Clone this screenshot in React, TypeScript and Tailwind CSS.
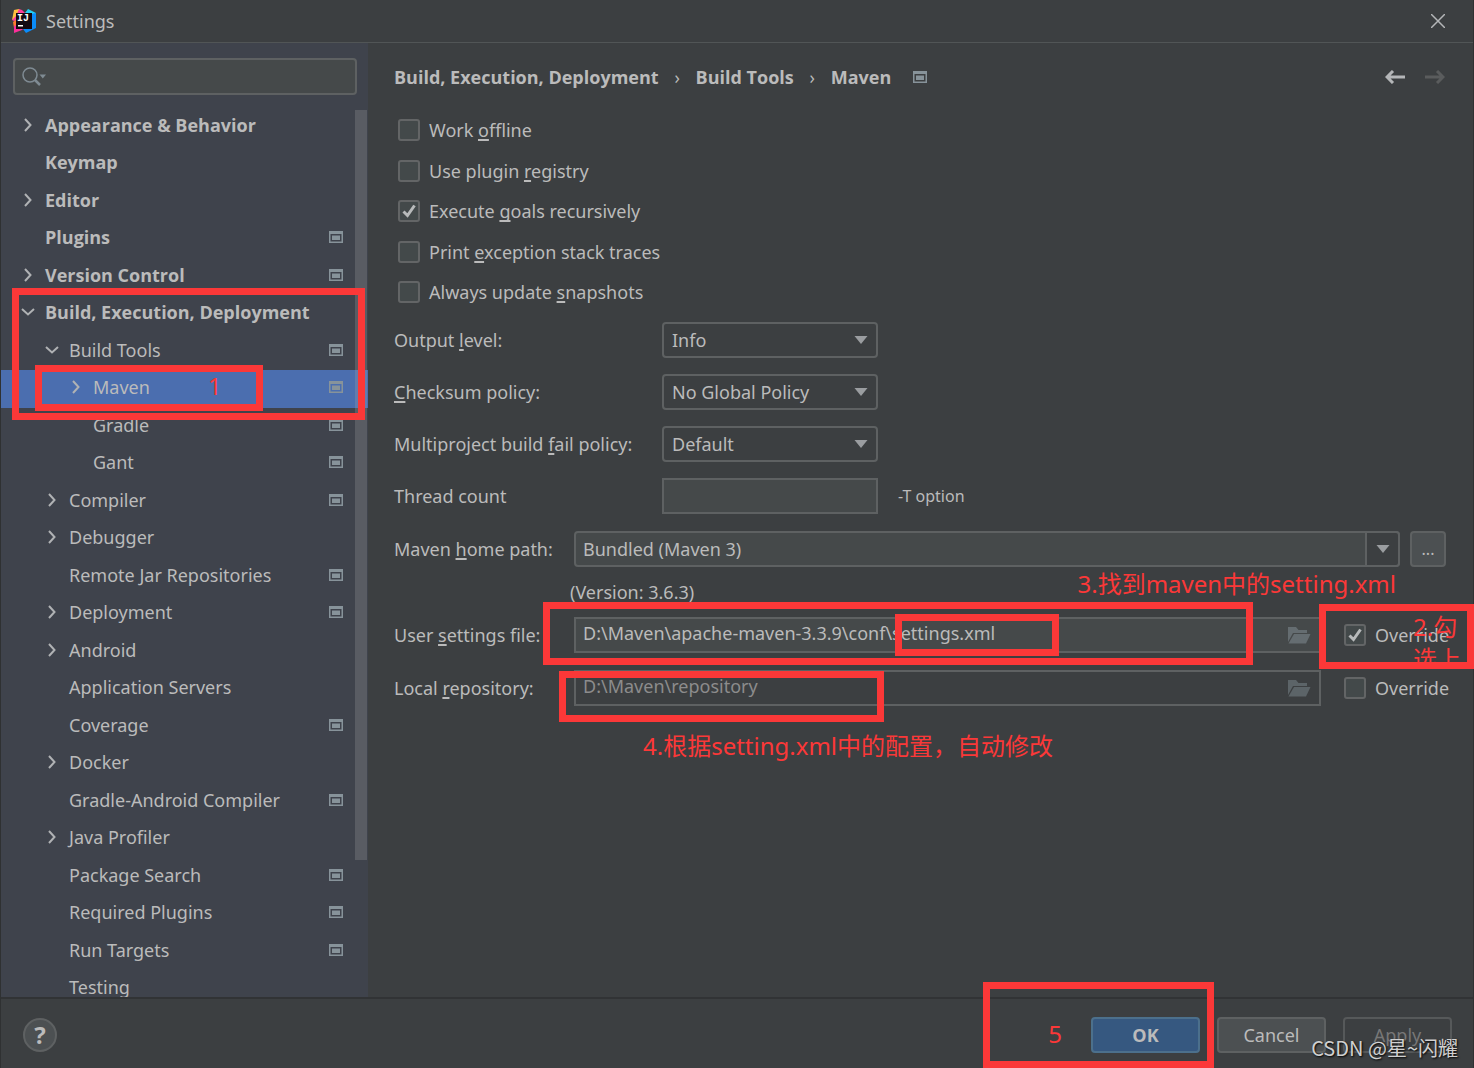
import React from "react";
import clsx from "clsx";

type TreeItem = {
  name: string;
  level: 0 | 1 | 2;
  arrow?: "right" | "down";
  project?: boolean;
  selected?: boolean;
};

const tree: TreeItem[] = [
  { name: "Appearance & Behavior", level: 0, arrow: "right" },
  { name: "Keymap", level: 0 },
  { name: "Editor", level: 0, arrow: "right" },
  { name: "Plugins", level: 0, project: true },
  { name: "Version Control", level: 0, arrow: "right", project: true },
  { name: "Build, Execution, Deployment", level: 0, arrow: "down" },
  { name: "Build Tools", level: 1, arrow: "down", project: true },
  { name: "Maven", level: 2, arrow: "right", project: true, selected: true },
  { name: "Gradle", level: 2, project: true },
  { name: "Gant", level: 2, project: true },
  { name: "Compiler", level: 1, arrow: "right", project: true },
  { name: "Debugger", level: 1, arrow: "right" },
  { name: "Remote Jar Repositories", level: 1, project: true },
  { name: "Deployment", level: 1, arrow: "right", project: true },
  { name: "Android", level: 1, arrow: "right" },
  { name: "Application Servers", level: 1 },
  { name: "Coverage", level: 1, project: true },
  { name: "Docker", level: 1, arrow: "right" },
  { name: "Gradle-Android Compiler", level: 1, project: true },
  { name: "Java Profiler", level: 1, arrow: "right" },
  { name: "Package Search", level: 1, project: true },
  { name: "Required Plugins", level: 1, project: true },
  { name: "Run Targets", level: 1, project: true },
  { name: "Testing", level: 1 },
];

const indent = ["pl-[19px]", "pl-[43px]", "pl-[67px]"];

// "Work &offline" -> the letter after & is the underlined mnemonic
function Mnemonic({ text }: { text: string }) {
  const at = text.indexOf("&");
  if (at < 0) return <span>{text}</span>;
  return (
    <span className="whitespace-nowrap">
      {text.slice(0, at)}
      <u className="underline decoration-2 underline-offset-2 [text-decoration-skip-ink:none]">
        {text[at + 1]}
      </u>
      {text.slice(at + 2)}
    </span>
  );
}

function ProjectIcon() {
  return (
    <svg width="14" height="12" viewBox="0 0 14 12" className="shrink-0">
      <path fill="#87939a" fillRule="evenodd" d="M0 0h14v12H0zM1.5 3v7.5h11V3z" />
      <path fill="#87939a" d="M3 4.5h8v4.5H3z" />
    </svg>
  );
}

function Chevron({ dir }: { dir: "right" | "down" }) {
  return (
    <svg width="16" height="16" viewBox="0 0 16 16" fill="none" stroke="#b0b2b4" strokeWidth="2">
      <path d={dir === "right" ? "M5 2l5.5 6L5 14" : "M2 5l6 5.5L14 5"} />
    </svg>
  );
}

function DownTriangle() {
  return (
    <svg width="14" height="8" viewBox="0 0 14 8" className="pointer-events-none">
      <path fill="#9a9da0" d="M0.5 0h13L7 8z" />
    </svg>
  );
}

function FolderIcon({ dim }: { dim?: boolean }) {
  return (
    <svg width="24" height="18" viewBox="0 0 24 18" fill={dim ? "#5c6468" : "#656d71"}>
      <path d="M1 16V1h8l2.500 3H20v3H6z" />
      <path d="M7 8h16.500L19 17.500H1.500z" />
    </svg>
  );
}

function Logo() {
  return (
    <svg width="24" height="24" viewBox="0 0 24 24">
      <path fill="#fdc13f" d="M2 1l5-1 3 4-5 5-5 2z" />
      <path fill="#fc3d9c" d="M7 0l3 1 4 4-8 6-4 1-2-1 4-4z" />
      <path fill="#fe7a2f" d="M1 13l4-3v8l-3 1z" />
      <path fill="#fb2f9a" d="M2 17l3-1 6 4-1 1-8 3z" />
      <path fill="#21d0f6" d="M13 4l3-4 4 2 4 2-1 6-4-5z" />
      <path fill="#0a8cfa" d="M19 5l5-1v15l-4 2-6 3-3-4 9-2z" />
      <path fill="#120a12" d="M4 4h16v16H4z" />
      <text x="5" y="12" fill="#fff" className="font-['Liberation_Mono'] text-[10px] font-bold">
        IJ
      </text>
      <path fill="#fff" d="M6 16h5v1.500H6z" />
    </svg>
  );
}

function Checkbox({ label, checked }: { label: string; checked?: boolean }) {
  return (
    <label className="flex items-center gap-[9px]">
      <span className="grid place-items-center">
        <input
          type="checkbox"
          defaultChecked={checked}
          className="peer col-start-1 row-start-1 size-[22px] appearance-none rounded-[3px] border-2 border-[#636566] bg-[#43494a]"
        />
        <svg
          width="14"
          height="14"
          viewBox="0 0 14 14"
          fill="none"
          stroke="#b8babb"
          strokeWidth="3"
          className="pointer-events-none invisible col-start-1 row-start-1 peer-checked:visible"
        >
          <path d="M1.500 7.500l4 4L12.500 1.500" />
        </svg>
      </span>
      <Mnemonic text={label} />
    </label>
  );
}

function SelectRow({ id, label, value }: { id: string; label: string; value: string }) {
  return (
    <div className="flex h-9 items-center">
      <label htmlFor={id} className="w-[268px] shrink-0">
        <Mnemonic text={label} />
      </label>
      <div className="grid h-9 w-[216px] items-center">
        <select
          id={id}
          className="col-start-1 row-start-1 h-9 appearance-none rounded border-2 border-[#5e6162] bg-[#3c3f41] pl-2"
        >
          <option>{value}</option>
        </select>
        <span className="pointer-events-none col-start-1 row-start-1 mr-2.5 justify-self-end">
          <DownTriangle />
        </span>
      </div>
    </div>
  );
}

type PathRowProps = { id: string; label: string; value: string; overridden?: boolean };

function PathRow({ id, label, value, overridden }: PathRowProps) {
  return (
    <div className="flex h-9 items-center">
      <label htmlFor={id} className="w-[180px] shrink-0">
        <Mnemonic text={label} />
      </label>
      <div
        className={clsx(
          "flex h-9 flex-1 items-center border-2 border-[#5e6162] pr-2",
          overridden ? "bg-[#45494a]" : "bg-[#3c3f41] text-[#8c8c8c]"
        )}
      >
        <input id={id} defaultValue={value} disabled={!overridden} className="h-full min-w-0 flex-1 pb-1 pl-[7px]" />
        <button type="button" aria-label="Browse">
          <FolderIcon dim={!overridden} />
        </button>
      </div>
      <div className="ml-[23px] w-[106px] shrink-0">
        <Checkbox label="Override" checked={overridden} />
      </div>
    </div>
  );
}

function Sidebar() {
  return (
    <aside className="relative flex w-[367px] shrink-0 flex-col overflow-hidden bg-[#3f434c]">
      <div className="mt-[15px] mr-[11px] ml-3 flex h-[37px] shrink-0 items-center rounded border-2 border-[#5e6162] bg-[#45494a] pl-[7px]">
        <svg width="26" height="20" viewBox="0 0 26 20" fill="none" stroke="#7f8b93">
          <circle cx="8" cy="8" r="7" strokeWidth="1.500" />
          <path d="M13 13l5 5" strokeWidth="2.500" />
          <path d="M17.500 7.500h6.500l-3.250 4z" fill="#7f8b93" stroke="none" />
        </svg>
        <input type="text" aria-label="Search settings" className="h-full min-w-0 flex-1 px-1" />
      </div>
      <ul role="tree" className="mt-[13px]">
        {tree.map((item) => (
          <li
            key={item.name}
            role="treeitem"
            aria-selected={!!item.selected}
            className={clsx(
              "flex items-center gap-[9px] pr-[25px] pb-1 odd:h-[37px] even:h-[38px]",
              indent[item.level],
              item.level === 0 && "font-['Open_Sans'] font-bold",
              item.selected && "bg-[#4b6eaf]"
            )}
          >
            <span className="size-4 shrink-0">{item.arrow && <Chevron dir={item.arrow} />}</span>
            <span className="flex-1 whitespace-nowrap">{item.name}</span>
            {item.project && <ProjectIcon />}
          </li>
        ))}
      </ul>
      <div className="absolute top-[67px] right-px h-[750px] w-3 bg-[#a6a6a6]/25" />
    </aside>
  );
}

function Breadcrumbs() {
  return (
    <div className="flex h-9 items-center">
      <nav className="flex flex-1 items-center font-['Open_Sans'] font-bold">
        <a href="#build">Build, Execution, Deployment</a>
        <span className="w-[37px] text-center font-normal">›</span>
        <a href="#tools">Build Tools</a>
        <span className="w-[37px] text-center font-normal">›</span>
        <a href="#maven" className="mr-[22px]">
          Maven
        </a>
        <ProjectIcon />
      </nav>
      <div className="mr-[5px] flex gap-5">
        <button type="button" aria-label="Back">
          <svg width="20" height="14" viewBox="0 0 20 14" fill="none" stroke="#b4b6b8" strokeWidth="3">
            <path d="M8 1L2 7l6 6M2 7h18" />
          </svg>
        </button>
        <button type="button" aria-label="Forward">
          <svg width="20" height="14" viewBox="0 0 20 14" fill="none" stroke="#5a5c5d" strokeWidth="3">
            <path d="M12 1l6 6-6 6M18 7H0" />
          </svg>
        </button>
      </div>
    </div>
  );
}

function MavenForm() {
  return (
    <main className="min-w-0 flex-1 pt-4 pr-[23px] pl-[26px]">
      <Breadcrumbs />

      <div className="mt-[15px] pl-1 *:odd:h-10 *:even:h-[41px]">
        <Checkbox label="Work &offline" />
        <Checkbox label="Use plugin &registry" />
        <Checkbox label="Execute &goals recursively" checked />
        <Checkbox label="Print &exception stack traces" />
        <Checkbox label="Always update &snapshots" />
      </div>

      <div className="mt-2.5 flex flex-col gap-4">
        <SelectRow id="output" label="Output &level:" value="Info" />
        <SelectRow id="checksum" label="&Checksum policy:" value="No Global Policy" />
        <SelectRow id="fail" label="Multiproject build &fail policy:" value="Default" />
        <div className="flex h-9 items-center">
          <label htmlFor="threads" className="w-[268px] shrink-0">
            Thread count
          </label>
          <input id="threads" className="h-9 w-[216px] border-2 border-[#5e6162] bg-[#45494a] px-2" />
          <span className="ml-5 text-base">-T option</span>
        </div>
      </div>

      <div className="mt-[17px] flex h-9 items-center">
        <label htmlFor="home" className="w-[180px] shrink-0">
          <Mnemonic text="Maven &home path:" />
        </label>
        <div className="grid h-9 flex-1">
          <select
            id="home"
            className="col-start-1 row-start-1 appearance-none rounded border-2 border-[#5e6162] bg-[#45494a] pl-[7px]"
          >
            <option>Bundled (Maven 3)</option>
          </select>
          <span className="pointer-events-none col-start-1 row-start-1 grid w-[35px] place-items-center justify-self-end rounded-r border-2 border-[#5e6162] bg-[#3c3f41]">
            <DownTriangle />
          </span>
        </div>
        <button
          type="button"
          className="mr-1 ml-2.5 size-9 rounded border-2 border-[#5e6162] bg-[#4c5052] text-base"
        >
          ...
        </button>
      </div>
      <p className="flex h-[50px] items-center pl-44">(Version: 3.6.3)</p>

      <div className="flex flex-col gap-[17px]">
        <PathRow
          id="settings"
          label="User &settings file:"
          value="D:\Maven\apache-maven-3.3.9\conf\settings.xml"
          overridden
        />
        <PathRow id="repo" label="Local &repository:" value="D:\Maven\repository" />
      </div>
    </main>
  );
}

function Footer() {
  return (
    <footer className="flex h-[71px] shrink-0 items-center border-t-2 border-t-[#313335] pt-0.5 pr-[21px] pl-[22px]">
      <button
        type="button"
        aria-label="Help"
        className="mr-auto size-[34px] rounded-full border-2 border-[#5e6162] bg-[#4c5052] text-2xl leading-none font-bold"
      >
        ?
      </button>
      <div className="flex gap-[17px]">
        <button
          type="button"
          className="h-9 w-[109px] rounded border-2 border-[#4c708c] bg-[#365880] font-['Open_Sans'] font-bold"
        >
          OK
        </button>
        <button type="button" className="h-9 w-[109px] rounded border-2 border-[#5e6162] bg-[#4c5052]">
          Cancel
        </button>
        <button type="button" disabled className="h-9 w-[109px] rounded border-2 border-[#56595a] text-[#777777]">
          Apply
        </button>
      </div>
    </footer>
  );
}

// Red boxes and numbered steps drawn over the dialog
function Annotations() {
  return (
    <div className="pointer-events-none absolute inset-0 overflow-hidden text-2xl text-[#fb3838] *:absolute">
      <div className="top-[288px] left-3 h-[132px] w-[353px] border-7 border-[#fb3838]" />
      <div className="top-[365px] left-[35px] h-[46px] w-[228px] border-7 border-[#fb3838]" />
      <div className="top-[602px] right-[221px] left-[543px] h-[63px] border-7 border-[#fb3838]" />
      <div className="top-[614px] left-[895px] h-[42px] w-[164px] border-7 border-[#fb3838]" />
      <div className="top-[671px] left-[559px] h-[51px] w-[325px] border-7 border-[#fb3838]" />
      <div className="top-[604px] right-0 h-[65px] w-[155px] overflow-hidden border-7 border-[#fb3838] pl-[87px] leading-8 whitespace-nowrap">
        2.勾
        <br />
        选上
      </div>
      <div className="right-[260px] bottom-0 h-[86px] w-[231px] border-7 border-[#fb3838]" />
      <span className="top-[370px] left-[208px]">1</span>
      <span className="top-[568px] right-[78px] whitespace-nowrap">3.找到maven中的setting.xml</span>
      <span className="top-[730px] left-[643px] whitespace-nowrap">4.根据setting.xml中的配置，自动修改</span>
      <span className="right-[412px] bottom-[18px]">5</span>
      <span className="right-4 bottom-1.5 font-['Noto_Sans_CJK_SC',sans-serif] text-xl whitespace-nowrap text-[#d0d0d0] [text-shadow:1px_1px_2px_#000]">
        CSDN @星~闪耀
      </span>
    </div>
  );
}

export default function App() {
  return (
    <div className="relative font-['Noto_Sans','Noto_Sans_CJK_SC',sans-serif] text-lg text-[#bbbbbb]">
      <div className="flex h-screen flex-col border-x border-[#2f3132] bg-[#3c3f41]">
        <header className="flex h-[43px] shrink-0 items-center border-b border-[#515556] pr-7 pl-[11px]">
          <Logo />
          <h1 className="ml-2.5 flex-1">Settings</h1>
          <button type="button" aria-label="Close">
            <svg width="14" height="14" viewBox="0 0 14 14" stroke="#b4b6b8" strokeWidth="1.500">
              <path d="M0 0l14 14M14 0L0 14" />
            </svg>
          </button>
        </header>
        <div className="flex min-h-0 flex-1">
          <Sidebar />
          <MavenForm />
        </div>
        <Footer />
      </div>
      <Annotations />
    </div>
  );
}
